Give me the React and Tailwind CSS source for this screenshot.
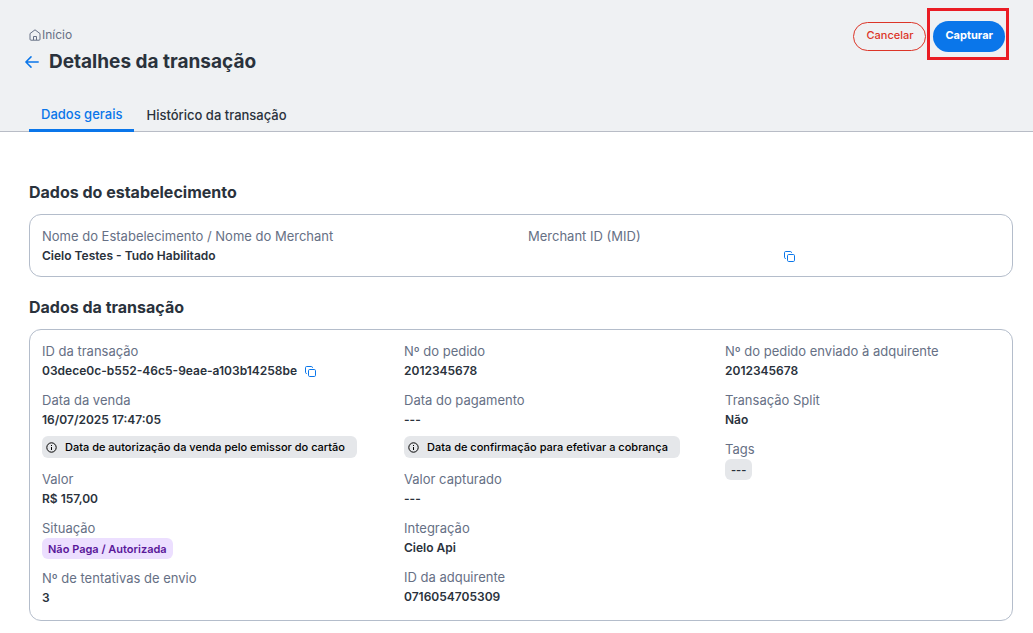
import React, { useState } from 'react';

const TABS = ['Dados gerais', 'Histórico da transação'];

function HomeIcon() {
  return (
    <svg width="12" height="12" viewBox="0 0 12 12" fill="none" stroke="currentColor" strokeLinejoin="round" aria-hidden="true">
      <path d="M1 4.6 6 .8l5 3.8v5.6a1 1 0 0 1-1 1H2a1 1 0 0 1-1-1z" />
      <path d="M4.5 11V7.5h3V11" />
    </svg>
  );
}

function BackIcon() {
  return (
    <svg width="14" height="12" viewBox="0 0 14 12" fill="none" stroke="currentColor" strokeWidth="1.5" strokeLinecap="round" strokeLinejoin="round" aria-hidden="true">
      <path d="M13.2 6H1M6 .9.9 6 6 11.1" />
    </svg>
  );
}

function CopyButton({ value, label }) {
  const copy = () => {
    if (value) navigator.clipboard?.writeText(value);
  };

  return (
    <button type="button" onClick={copy} aria-label={label} className="text-[#0a76ea] cursor-pointer">
      <svg width="11" height="11" viewBox="0 0 11 11" fill="none" stroke="currentColor" aria-hidden="true">
        <rect x="3.5" y="3.5" width="7" height="7" rx="1.2" />
        <path d="M2 7.5h-.3A1.2 1.2 0 0 1 .5 6.3V1.7A1.2 1.2 0 0 1 1.7.5h4.6a1.2 1.2 0 0 1 1.2 1.2V2" />
      </svg>
    </button>
  );
}

function Field({ label, children, hint }) {
  return (
    <div>
      <dt className="text-[13px] leading-5 text-[#667085]">{label}</dt>
      <dd className="text-xs leading-5 font-semibold text-[#2a323c]">{children}</dd>
      {hint && <Hint>{hint}</Hint>}
    </div>
  );
}

function Hint({ children }) {
  return (
    <dd className="mt-1.5 mb-0.5 flex h-[22px] w-fit items-center gap-2 rounded-md bg-[#e5e7ea] pl-1 pr-3 text-[11px] font-medium text-black">
      <svg width="11" height="11" viewBox="0 0 11 11" fill="none" stroke="currentColor" aria-hidden="true">
        <circle cx="5.5" cy="5.5" r="4.7" />
        <path d="M5.5 5v3M5.5 3v1" />
      </svg>
      {children}
    </dd>
  );
}

function Badge({ className, children }) {
  return (
    <span className={`flex h-[21px] w-fit items-center rounded-md px-1.5 text-[11px] ${className}`}>
      {children}
    </span>
  );
}

function App() {
  const [activeTab, setActiveTab] = useState(TABS[0]);

  return (
    <div className="bg-white font-['Inter','Open_Sans',sans-serif] text-[#2a323c]">
      <header className="border-b border-[#b8bcc6] bg-[#eff1f3] pl-[29px] pr-6">
        <div className="flex items-start justify-between">
          <div className="pt-[25px]">
            <a href="#inicio" className="flex w-fit items-center gap-px text-xs leading-5 text-[#667085]">
              <HomeIcon />
              Início
            </a>
            <div className="-ml-1 mt-[3px] flex items-center gap-2.5">
              <button type="button" aria-label="Voltar" className="text-[#0a76ea] cursor-pointer">
                <BackIcon />
              </button>
              <h1 className="text-[19px] leading-7 font-bold">Detalhes da transação</h1>
            </div>
          </div>

          <div className="flex items-start gap-px pt-2">
            <button
              type="button"
              className="mt-3.5 h-[29px] rounded-full border border-[#dc3528] px-3 pb-0.5 text-[11px] font-medium text-[#dc3528] cursor-pointer"
            >
              Cancelar
            </button>
            <div className="border-[3px] border-[#ea1c24] pt-2.5 pr-px pb-[5px] pl-[3px]">
              <button
                type="button"
                className="block h-[31px] rounded-full bg-[#0a76ea] px-3 pb-0.5 text-[11px] font-bold text-white cursor-pointer"
              >
                Capturar
              </button>
            </div>
          </div>
        </div>

        <div role="tablist" className="-mb-px mt-6 flex h-8">
          {TABS.map(tab => (
            <button
              key={tab}
              type="button"
              role="tab"
              aria-selected={activeTab === tab}
              onClick={() => setActiveTab(tab)}
              className={`px-3 text-[13px] font-medium cursor-pointer ${
                activeTab === tab ? 'border-b-[3px] border-[#0a76ea] text-[#0a76ea]' : 'text-[#2a323c]'
              }`}
            >
              {tab}
            </button>
          ))}
        </div>
      </header>

      <main className="pt-12 pr-5 pb-3 pl-[29px]">
        <section>
          <h2 className="text-base leading-6 font-bold">Dados do estabelecimento</h2>
          <dl className="mt-2.5 grid grid-cols-[486fr_472fr] rounded-xl border border-[#b4bdcb] px-3 pt-[11px] pb-2.5">
            <Field label="Nome do Estabelecimento / Nome do Merchant">Cielo Testes - Tudo Habilitado</Field>
            <Field label="Merchant ID (MID)">
              <span className="flex h-5 items-center">
                <span className="w-64" />
                <CopyButton label="Copiar Merchant ID" />
              </span>
            </Field>
          </dl>
        </section>

        <section className="mt-[18px]">
          <h2 className="text-base leading-6 font-bold">Dados da transação</h2>
          <dl className="mt-2.5 grid grid-cols-[362fr_321fr_275fr] rounded-xl border border-[#b4bdcb] px-3 pt-[11px] pb-3">
            <div className="flex flex-col gap-[9px]">
              <Field label="ID da transação">
                <span className="flex items-center gap-2">
                  03dece0c-b552-46c5-9eae-a103b14258be
                  <CopyButton value="03dece0c-b552-46c5-9eae-a103b14258be" label="Copiar ID da transação" />
                </span>
              </Field>
              <Field label="Data da venda" hint="Data de autorização da venda pelo emissor do cartão">
                16/07/2025 17:47:05
              </Field>
              <Field label="Valor">R$ 157,00</Field>
              <Field label="Situação">
                <Badge className="bg-[#ecdfff] text-[#5a189a]">Não Paga / Autorizada</Badge>
              </Field>
              <Field label="Nº de tentativas de envio">3</Field>
            </div>

            <div className="flex flex-col gap-[9px]">
              <Field label="Nº do pedido">2012345678</Field>
              <Field label="Data do pagamento" hint="Data de confirmação para efetivar a cobrança">
                ---
              </Field>
              <Field label="Valor capturado">---</Field>
              <Field label="Integração">Cielo Api</Field>
              <Field label="ID da adquirente">0716054705309</Field>
            </div>

            <div className="flex flex-col gap-[9px]">
              <Field label="Nº do pedido enviado à adquirente">2012345678</Field>
              <Field label="Transação Split">Não</Field>
              <Field label="Tags">
                <Badge className="bg-[#e5e7ea]">---</Badge>
              </Field>
            </div>
          </dl>
        </section>
      </main>
    </div>
  );
}

export default App;
